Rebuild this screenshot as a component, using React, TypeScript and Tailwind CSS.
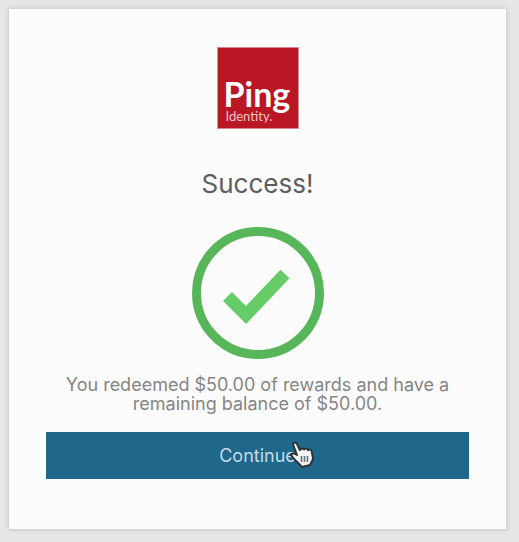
function PingLogo() {
  return (
    <div
      role="img"
      aria-label="Ping Identity"
      className="flex size-20 flex-col justify-end bg-[#ba1724] px-2 pb-1.5 font-['Lato',sans-serif] text-white outline outline-[#d98c92]"
    >
      <span className="-ml-0.5 text-[34px] leading-8 font-bold">Ping</span>
      <span className="text-[13px] leading-3 text-[#f3c3c6]">Identity.</span>
    </div>
  );
}

function SuccessIcon() {
  return (
    <svg viewBox="0 0 134 134" className="size-[134px]" aria-hidden="true">
      <circle cx="67" cy="67" r="61.5" fill="none" stroke="#58b65a" strokeWidth="9" />
      <path d="M36.5 70.5 L55 89 L94 48" fill="none" stroke="#65cc68" strokeWidth="12.5" />
    </svg>
  );
}

function HandCursor() {
  return (
    <svg
      viewBox="0 0 26 30"
      className="pointer-events-none absolute top-1/2 left-full h-[30px] w-[26px] -translate-x-1.5 -translate-y-1/2"
      aria-hidden="true"
    >
      <path
        d="M3 4 C4 2 6 2 7 4 L10 10 C11 8 13 8 14 9.5 C15 8 17 8 18 10 C20 9 22 10 22 13 L23 18 C23 21 21 22 20 25 L12 27 C9 23 4 20 1 15 C1 13 4 13 7 15 L4 7 Z"
        fill="#f4f4f4"
        stroke="#28323a"
        strokeWidth="2"
        strokeLinejoin="round"
      />
      <path d="M11.5 16 V22 M14.5 16 V22 M17.5 16 V22" stroke="#68727a" strokeWidth="1.6" />
    </svg>
  );
}

export default function App() {
  return (
    <div className="min-h-screen bg-[#e6e6e6] pt-[9px] pr-[13px] pb-3 pl-[9px] font-['Inter',sans-serif]">
      <main className="flex flex-col items-center bg-[#fcfcfc] px-[37px] pt-[39px] pb-[50px] shadow-[0_0_4px_1px_#c8c8c8]">
        <PingLogo />
        <h1 className="mt-9 text-[26px] leading-10 text-[#5c5d61]">Success!</h1>
        <div className="mt-[22px]">
          <SuccessIcon />
        </div>
        <p className="mt-[15px] max-w-[400px] text-center text-lg leading-[19px] text-[#858585]">
          You redeemed $50.00 of rewards and have a remaining balance of $50.00.
        </p>
        <button
          type="button"
          className="mt-[19px] h-[47px] w-full cursor-pointer bg-[#20678c] text-lg text-[#c5dbe8]"
        >
          <span className="relative">
            Continue
            <HandCursor />
          </span>
        </button>
      </main>
    </div>
  );
}
